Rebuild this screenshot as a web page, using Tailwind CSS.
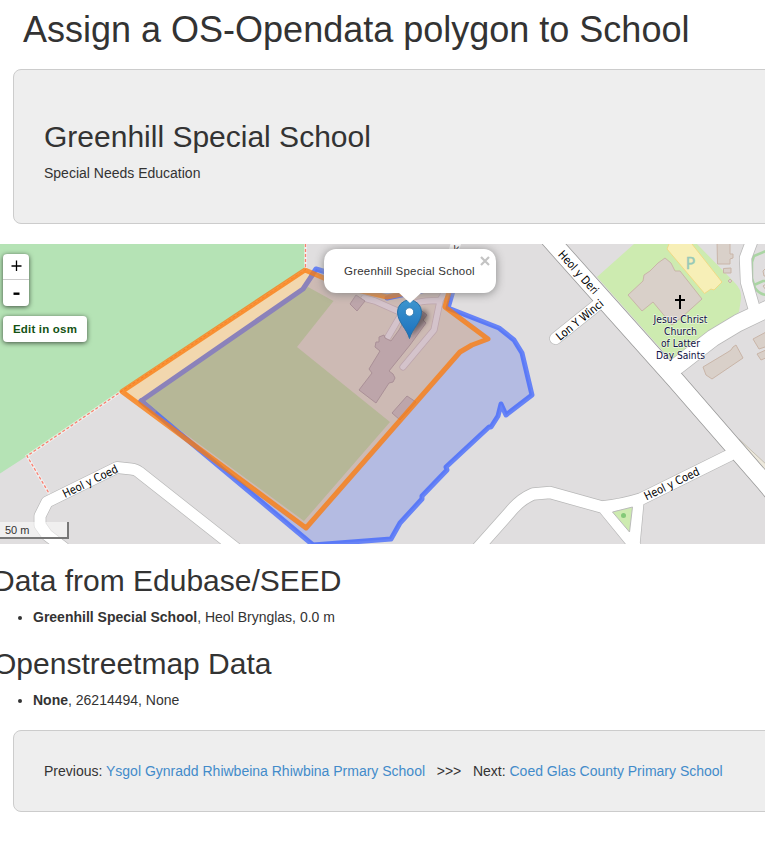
<!DOCTYPE html>
<html lang="en">
<head>
<meta charset="utf-8">
<title>Assign a OS-Opendata polygon to School</title>
<script src="https://cdn.jsdelivr.net/npm/@tailwindcss/browser@4"></script>
</head>
<body class="overflow-hidden bg-white font-['Liberation_Sans',Arial,sans-serif] text-[14px] leading-5 text-[#333]">
<h1 class="ml-[23px] mt-[10px] mb-[19px] h-10 whitespace-nowrap text-[36px] leading-[39.6px]">Assign a OS-Opendata polygon to School</h1>

<section class="ml-[13px] -mr-5 h-[155px] rounded-lg border border-[#ccc] bg-[#eee] px-[30px] pt-[50px]">
  <h2 class="mb-[10px] text-[30px] leading-[33px]">Greenhill Special School</h2>
  <p>Special Needs Education</p>
</section>

<section class="relative mt-5 h-[300px] overflow-hidden bg-[#dfdddf]">
<svg class="block h-[300px] w-[765px]" viewBox="0 244 765 300" fill="none" font-family="DejaVu Sans, sans-serif">
  <defs>
    <linearGradient id="pin" x1="0" y1="0" x2="0" y2="1"><stop offset="0" stop-color="#3c95cf"/><stop offset="1" stop-color="#1c70bd"/></linearGradient>
    <filter id="soft" x="-50%" y="-50%" width="200%" height="200%"><feGaussianBlur stdDeviation="2.5"/></filter>
  </defs>
  <rect x="0" y="244" width="765" height="300" fill="#e0dedf"/>
  <!-- woodland -->
  <path d="M0 244H305V268L122 391L27 456L0 473.500Z" fill="#b5e3b5"/>
  <!-- footpaths -->
  <g stroke="#fff" stroke-opacity=".5" stroke-width="3"><path d="M305.500 244V270L122 391L27 456L50 495"/></g>
  <g stroke="#fa8072" stroke-width="1.300" stroke-dasharray="3 2"><path d="M305.500 244V270L122 391L27 456L50 495"/></g>
  <!-- church site -->
  <path d="M597 277L634 244H697L735 283Q742 290 741 299L739 312L708 334L676 360L670 359Z" fill="#cdebb0"/>
  <path d="M669 244L667 249L704.500 293.500L711 289L714 290L722 282L692 244" fill="#f7efb7" stroke="#f0da85"/>
  <path d="M665 258L671 263L675 271L680 271L702 299L682 317L672 325L653 302L642 311L628 295L643 281L644 275L650 271L658 263Z" fill="#d9d0c9" stroke="#c9b5a8"/>
  <path d="M717 240L717.500 264H730V259L733 258V254H730V240M723.500 268.500L731 268V273H723.500ZM728 281L730 279L732 281L730 283ZM703 367L728 352L731 350L733 347L736 345L743 358L712 379L706 375ZM768 331L753 339L759 349L768 346M768 349L757 354L761 360L768 357" fill="#d9d0c9" stroke="#c9b5a8"/>
  <path d="M766 251L754 256L752 262V278L755 288Q759 294 766 295M754 285L763 281H766" stroke="#aad5a3" stroke-width="2.500"/>
  <path d="M766 268L763 271L764 276H766M766 284L763 286L766 290" stroke="#c9b5a8"/>
  <path d="M739 439L768 466L768 474" fill="#ece8dc" stroke="#c5c0b4"/>
  <!-- roads: casing, then surface -->
  <g stroke-linejoin="round" stroke-linecap="round">
    <g stroke="#b8b8b8">
      <path d="M555.500 338.500L601 302" stroke-width="12.500"/>
      <path d="M753 238L745.500 258L746.500 282L754 308" stroke-width="13"/>
      <path d="M677 366L713 338L738 323L780 303" stroke-width="18"/>
      <path d="M250 559.500L139 472Q136 469.500 131 469L117 467.500L47 502L40 516V525L47 535L64 548" stroke-width="12.500"/>
      <path d="M470 557L510 512Q520 499.500 533 494L550 492.500L602 507Q622 505 641 499L730 455M604 508L635 546M638 500L633.500 548" stroke-width="13"/>
    </g>
    <path d="M540 228L554 244L675.500 380L765 483L780 501" stroke="#999" stroke-width="18.500"/>
    <g stroke="#fff">
      <path d="M555.500 338.500L601 302" stroke-width="11.300"/>
      <path d="M753 238L745.500 258L746.500 282L754 308" stroke-width="11.500"/>
      <path d="M677 366L713 338L738 323L780 303" stroke-width="16.500"/>
      <path d="M250 559.500L139 472Q136 469.500 131 469L117 467.500L47 502L40 516V525L47 535L64 548" stroke-width="11.200"/>
      <path d="M470 557L510 512Q520 499.500 533 494L550 492.500L602 507Q622 505 641 499L730 455M604 508L635 546M638 500L633.500 548" stroke-width="11.600"/>
      <path d="M540 228L554 244L675.500 380L765 483L780 501" stroke-width="17"/>
      <path d="M457 240L453 253" stroke-width="10"/>
    </g>
  </g>
  <path d="M612.500 512L632.500 507L629.500 532Z" fill="#cdebb0" stroke="#bbb"/>
  <circle cx="623.500" cy="515.500" r="2.500" fill="#83c978"/>
  <!-- area fills: open data polygon, mapped polygon, grounds, pitch -->
  <path d="M316 269L303 289L141 401L313 545L391 539L400 523L422 499V496L447 470L446 467L489 427H491L498 416L501 404L506 415L532 395L522 353L514 340L499 328L448 308L455 284L365 286Z" fill="#b4bbe2"/>
  <path d="M305 270L122 391.500L306 528L460 352L472 345L488 339L445 307L451 284L420 290L387 297L345 287Z" fill="#f2d7ae"/>
  <path d="M312 274L303 290L139 403L306 528L460 352L472 345L488 339L445 307L451 284L420 290L387 297L345 287Z" fill="#cdbab4"/>
  <path d="M308 287L333.500 301L297 347L390 422L304 521L142 402Z" fill="#b6b797"/>
  <!-- school drives and buildings -->
  <g stroke-linejoin="round" stroke-linecap="round">
    <path d="M364 298L375 301L402 313L388 337M405 308Q415 300 440 300.500L446 290M440 301L434 330L403 367" stroke="#bda5ac" stroke-width="7"/>
    <path d="M364 298L375 301L402 313L388 337M405 308Q415 300 440 300.500L446 290M440 301L434 330L403 367" stroke="#d4c3cb" stroke-width="5.500"/>
  </g>
  <path d="M356 295L365 301L357 311L350 304ZM413 304L427 315L423 320L426 323L410 345L389 371L393 374L395 378L393 382L389 383L376 403L359 390L372 373L369 369L380 351L375 347L376 342L379 342L379 337L384 335L385 338L391 341L399 330Z" fill="#bda5aa" stroke="#aa9097"/>
  <path d="M407 396L416 402L400 420L392 413Z" fill="#bda5aa" stroke="#aa9097"/>
  <!-- polygon outlines -->
  <path d="M141 401L313 545L391 539L400 523L422 499V496L447 470L446 467L489 427H491L498 416L501 404L506 415L532 395L522 353L514 340L499 328L448 308L455 284L387 298M350 279L316 269L312 275" stroke="#3860ff" stroke-opacity=".72" stroke-width="5" stroke-linejoin="round" stroke-linecap="round"/>
  <path d="M313 274L303 289L141 401L155 413" stroke="#8b82ba" stroke-width="5" stroke-linejoin="round"/>
  <path d="M305 270L122 391.500L306 528L460 352L472 345L488 339L445 307L451 284L420 290L387 297L345 287Z" stroke="#fb7a0c" stroke-opacity=".77" stroke-width="5" stroke-linejoin="round"/>
  <!-- map labels -->
  <g fill="#000" font-size="11.500" stroke="#fff" stroke-width="1" paint-order="stroke">
    <text transform="translate(65 498) rotate(-26)" textLength="60" lengthAdjust="spacingAndGlyphs">Heol y Coed</text>
    <text transform="translate(646.500 500.500) rotate(-26)" textLength="60" lengthAdjust="spacingAndGlyphs">Heol y Coed</text>
    <text transform="translate(557.500 255) rotate(48)" textLength="54" lengthAdjust="spacingAndGlyphs">Heol y Deri</text>
    <text transform="translate(560 341) rotate(-39)" textLength="57" lengthAdjust="spacingAndGlyphs">Lon Y Winci</text>
    <text transform="translate(452 250) rotate(20)" font-size="10">y</text>
  </g>
  <text x="685.500" y="268.500" font-size="16" fill="#98c9b8" stroke="#98c9b8" stroke-width=".3">P</text>
  <path d="M680 295V309M675 300H685" stroke="#000" stroke-width="2"/>
  <g font-size="11.200" fill="#101044" stroke="#fff" stroke-opacity=".6" stroke-width="1.500" paint-order="stroke" text-anchor="middle">
    <text x="680.500" y="322.500" textLength="54" lengthAdjust="spacingAndGlyphs">Jesus Christ</text>
    <text x="680.500" y="334.500" textLength="33" lengthAdjust="spacingAndGlyphs">Church</text>
    <text x="680.500" y="346.500" textLength="39" lengthAdjust="spacingAndGlyphs">of Latter</text>
    <text x="680.500" y="358.500" textLength="49" lengthAdjust="spacingAndGlyphs">Day Saints</text>
  </g>
  <!-- marker -->
  <path d="M410 338L426 322Q431 312 424 310Q418 308 414 319Z" fill="#000" fill-opacity=".4" filter="url(#soft)"/>
  <path d="M409.500 338.500C407 329 397.500 322 397.500 312A12 12 0 0 1 421.500 312C421.500 322 412 329 409.500 338.500Z" fill="url(#pin)" stroke="#2670a6"/>
  <circle cx="409.500" cy="312" r="4.200" fill="#fff" stroke="#2a72a7" stroke-width=".8"/>
</svg>

  <!-- popup -->
  <div class="absolute left-[324px] top-[5px] flex h-11 w-[172px] items-center pl-5 rounded-xl bg-white text-[11.5px] tracking-[0.23px] text-[#333] shadow-[0_1px_10px_#888]">
    <span class="whitespace-nowrap">Greenhill Special School</span>
    <svg class="absolute left-[74px] top-[43px]" width="24" height="12" viewBox="0 0 24 12"><path d="M0 0H24L12 11Z" fill="#fff"/></svg>
    <svg class="absolute left-[156px] top-[7px]" width="10" height="10" viewBox="0 0 10 10"><path d="M1 1L9 9M9 1L1 9" stroke="#c3c3c3" stroke-width="2.200"/></svg>
  </div>

  <!-- map controls -->
  <div class="absolute left-[3px] top-[10px] flex h-[52px] w-[26px] flex-col rounded bg-white shadow-[0_1px_5px_rgba(0,0,0,0.65)]">
    <div class="flex h-[26px] justify-center border-b border-[#ccc] pl-px pt-[6px]"><svg width="11" height="11" viewBox="0 0 11 11"><path d="M.5 6H10.500M5.500 .5V11" stroke="#000" stroke-width="1.300"/></svg></div>
    <div class="flex h-[26px] justify-center pl-px pt-[12px]"><svg width="7" height="4" viewBox="0 0 7 4"><path d="M.5 1.700H6.500" stroke="#000" stroke-width="2.400"/></svg></div>
  </div>
  <div class="absolute left-[3px] top-[72px] flex h-[26px] w-[84px] items-center justify-center whitespace-nowrap rounded bg-white text-[11.5px] tracking-[0.2px] font-bold text-[#145214] shadow-[0_1px_5px_rgba(0,0,0,0.65)]">Edit in osm</div>
  <div class="absolute -left-1 bottom-[5px] h-[17px] w-[73px] border-2 border-t-0 border-[#777] bg-white/50 pl-[7px] text-[11px] leading-[16px] text-[#333]">50 m</div>
</section>

<section class="-ml-[7px] mt-5">
  <h2 class="mb-[10px] text-[30px] leading-[33px]">Data from Edubase/SEED</h2>
  <ul class="list-disc pl-10"><li><strong>Greenhill Special School</strong>, Heol Brynglas, 0.0 m</li></ul>
  <h2 class="mb-[10px] mt-5 text-[30px] leading-[33px]">Openstreetmap Data</h2>
  <ul class="list-disc pl-10"><li><strong>None</strong>, 26214494, None</li></ul>
</section>

<nav class="ml-[13px] -mr-5 mt-5 h-[82px] whitespace-pre rounded-lg border border-[#ccc] bg-[#eee] p-[30px]">Previous: <a class="text-[#428bca]">Ysgol Gynradd Rhiwbeina Rhiwbina Prmary School</a>   &gt;&gt;&gt;   Next: <a class="text-[#428bca]">Coed Glas County Primary School</a></nav>
</body>
</html>
